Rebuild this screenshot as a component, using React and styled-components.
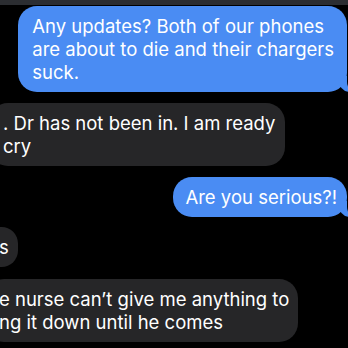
import styled, { createGlobalStyle } from "styled-components";

const GlobalStyle = createGlobalStyle`
  html, body {
    margin: 0;
    padding: 0;
    background: #000;
  }
  body {
    font-family: "Inter", "Liberation Sans", sans-serif;
    -webkit-font-smoothing: antialiased;
  }
`;

const Screen = styled.div`
  width: 348px;
  height: 348px;
  overflow: hidden;
  background: #000;
  display: flex;
  flex-direction: column;
`;

const TopBar = styled.div`
  height: 5px;
  flex-shrink: 0;
  background: #2b2d31;
`;

const Thread = styled.div`
  display: flex;
  flex-direction: column;
  padding: 1px 1px 0 0;
`;

// received bubbles run off the left edge of the crop, $hidden is how far
const Bubble = styled.div`
  position: relative;
  align-self: ${(p) => (p.$sent ? "flex-end" : "flex-start")};
  margin-top: ${(p) => p.$mt || 0}px;
  margin-left: ${(p) => -(p.$hidden || 0)}px;
  padding: 8.5px ${(p) => p.$pr || 13}px 8.5px ${(p) => p.$pl || 14}px;
  border-radius: 19px;
  background: ${(p) => (p.$sent ? "#4a8cf3" : "#262628")};
  color: #fff;
  font-size: 18.5px;
  line-height: 23px;

  ${(p) =>
    p.$tail &&
    `
    &::after {
      content: "";
      position: absolute;
      right: -5px;
      bottom: 0;
      width: 14px;
      height: 16px;
      background: #4a8cf3;
      border-bottom-left-radius: 12px 14px;
    }
    &::before {
      content: "";
      position: absolute;
      right: -12px;
      bottom: 0;
      width: 12px;
      height: 18px;
      background: #000;
      border-bottom-left-radius: 10px;
      z-index: 1;
    }
  `}
`;

const Line = styled.div`
  white-space: nowrap;
`;

function Message({ lines, ...rest }) {
  return (
    <Bubble {...rest}>
      {lines.map((l, i) => (
        <Line key={i}>{l}</Line>
      ))}
    </Bubble>
  );
}

export default function App() {
  return (
    <>
      <GlobalStyle />
      <Screen>
        <TopBar />
        <Thread>
          <Message
            $sent
            $tail
            lines={[
              "Any updates? Both of our phones",
              "are about to die and their chargers",
              "suck.",
            ]}
          />
          <Message
            $mt={11}
            $hidden={11}
            $pr={10}
            lines={[". Dr has not been in. I am ready", "cry"]}
          />
          <Message $sent $tail $mt={11} $pl={12} $pr={10} lines={["Are you serious?!"]} />
          <Message $mt={10} $hidden={15} $pr={9} lines={["s"]} />
          <Message
            $mt={12}
            $hidden={15}
            $pr={9}
            lines={["e nurse can\u2019t give me anything to", "ng it down until he comes"]}
          />
        </Thread>
      </Screen>
    </>
  );
}
